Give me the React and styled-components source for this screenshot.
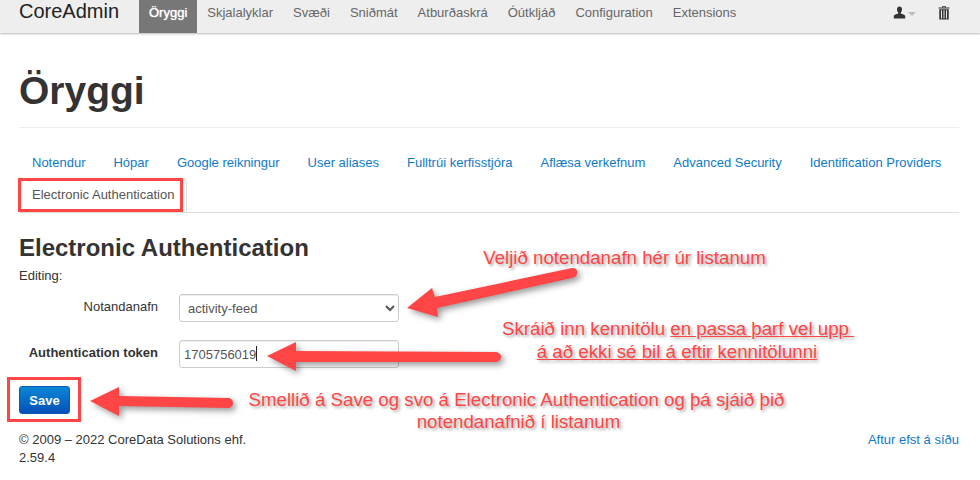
import React from "react";
import styled, { createGlobalStyle } from "styled-components";

const Global = createGlobalStyle`
  html, body { margin: 0; padding: 0; background: #fff; }
  body { font-family: "Liberation Sans", Arial, sans-serif; font-size: 13px; line-height: 18px; color: #333; }
  * { box-sizing: border-box; }
`;
const Page = styled.div`position: relative; width: 980px; height: 480px; overflow: hidden;`;
const Navbar = styled.header`
  display: flex; align-items: stretch; height: 33px; padding: 0 19px; background: #eeeeee;
  box-shadow: 0 1px 2px rgba(0,0,0,.28);
`;
const Brand = styled.div`font-size: 20px; line-height: 22px; color: #222; width: 120px;`;
const NavList = styled.nav`display: flex; flex: 1;`;
const NavItem = styled.a`
  padding: 5px 10px 0; font-size: 13px; line-height: 16px;
  color: ${p => p.$active ? "#fff" : "#666"};
  background: ${p => p.$active ? "#777" : "transparent"};
  text-shadow: ${p => p.$active ? "0 0 1px #fff" : "none"};
`;
const NavIcons = styled.div`display: flex; align-items: flex-start; padding-top: 6px; margin-right: 11px;`;
const Caret = styled.span`width: 0; height: 0; margin: 6px 0 0 2px; border: 4px solid transparent; border-top-color: #bbb; border-bottom: 0;`;
const IconGap = styled.span`width: 22px;`;
const Main = styled.main`padding: 0 21px 0 19px;`;
const Title = styled.h1`
  margin: 0; padding: 36px 0 14px; font-size: 39px; line-height: 44px; font-weight: 700; color: #333;
  border-bottom: 1px solid #eee;
`;
const Tabs = styled.ul`
  list-style: none; display: flex; flex-wrap: wrap; margin: 19px 0 0; padding: 0 0 1px; border-bottom: 1px solid #ddd;
`;
const Tab = styled.li`
  margin-right: 2px; padding: 6px 12px 7px; height: 33px; line-height: 18px; font-size: 13px; margin-bottom: -1px;
  border: 1px solid ${p => p.$active ? "#ddd" : "transparent"};
  border-bottom-color: ${p => p.$active ? "#fff" : "transparent"};
  border-radius: 4px 4px 0 0;
  color: ${p => p.$active ? "#555" : "#0f7ac7"};
  background: #fff;
`;
const Section = styled.h2`margin: 21px 0 0; font-size: 24px; line-height: 28px; font-weight: 700; color: #333;`;
const Editing = styled.div`margin-top: 5px; font-size: 13px; line-height: 18px;`;
const Row = styled.div`display: flex; align-items: center; margin-top: ${p => p.$first ? "9px" : "18px"};`;
const Label = styled.label`width: 139px; text-align: right; margin-right: 21px; font-size: 13px; font-weight: ${p => p.$bold ? 700 : 400}; color: #333; position: relative; top: -1px;`;
const Select = styled.select`
  width: 220px; height: 28px; padding: 0 4px; font: 13px "Liberation Sans", Arial, sans-serif; color: #555;
  background: #fff; border: 1px solid #ccc; border-radius: 3px; box-shadow: inset 0 1px 1px rgba(0,0,0,.075);
`;
const Input = styled.input`
  width: 220px; height: 28px; padding: 0 4px; font: 13px "Liberation Sans", Arial, sans-serif; color: #555;
  background: #fff; border: 1px solid #ccc; border-radius: 3px; box-shadow: inset 0 1px 1px rgba(0,0,0,.075);
`;
const Cursor = styled.span`position: absolute; left: 256px; top: 346px; width: 1px; height: 15px; background: #222;`;
const SaveButton = styled.button`
  display: block; margin-top: 18px; width: 51px; height: 28px; padding: 0; font: 700 13px "Liberation Sans", Arial, sans-serif;
  color: #fff; border: 1px solid #0b58b4; border-radius: 3px; background: linear-gradient(#0c86d6, #0451b8);
`;
const Footer = styled.footer`display: flex; justify-content: space-between; margin-top: 17px; font-size: 13px; line-height: 18px; color: #333;`;
const Copyright = styled.div``;
const TopLink = styled.a`color: #0f7ac7;`;
const Overlay = styled.svg`position: absolute; left: 0; top: 0; pointer-events: none; overflow: visible;`;
const Note = styled.div`
  position: absolute; left: ${p => p.$x}px; top: ${p => p.$y}px; width: ${p => p.$w}px; text-align: center;
  font-size: 18.7px; line-height: 22.5px; color: #ff4545; white-space: nowrap;
  text-shadow: 2px 2px 3px rgba(0,0,0,.35);
`;
const Under = styled.span`text-decoration: underline; white-space: pre;`;

const UserIcon = () => (
  <svg width="13" height="13" viewBox="0 0 13 13"><path fill="#333" d="M4 3.2C4 1.4 5 .5 6.5.5S9 1.4 9 3.2c0 1.4-.5 2.6-1.2 3.3v1.1c1.6.7 4 1.2 4.4 2.3v2.6H.8V9.9c.4-1.1 2.8-1.6 4.4-2.3V6.5C4.500 5.800 4 4.600 4 3.200z" /></svg>
);
const TrashIcon = () => (
  <svg width="12" height="14" viewBox="0 0 12 14"><path fill="#333" d="M4.200 0h3.600v1.500H11.500v1H.5v-1h3.700zM5 .8v.7h2V.8zM1.300 3.300h9.400V13.500H1.300zM3 4.300v8.200h1V4.300zm2.500 0v8.200h1V4.300zm2.500 0v8.200h1V4.300z" fillRule="evenodd" /></svg>
);

const Arrow = ({ d }) => <path d={d} fill="#ff4545" />;

const navItems = ["Skjalalyklar", "Svæði", "Sniðmát", "Atburðaskrá", "Óútkljáð", "Configuration", "Extensions"];
const tabItems = ["Notendur", "Hópar", "Google reikningur", "User aliases", "Fulltrúi kerfisstjóra", "Aflæsa verkefnum", "Advanced Security", "Identification Providers"];

export default function App() {
  return (
    <Page>
      <Global />
      <Navbar>
        <Brand>CoreAdmin</Brand>
        <NavList>
          <NavItem $active>Öryggi</NavItem>
          {navItems.map(n => <NavItem key={n}>{n}</NavItem>)}
        </NavList>
        <NavIcons><UserIcon /><Caret /><IconGap /><TrashIcon /></NavIcons>
      </Navbar>
      <Main>
        <Title>Öryggi</Title>
        <Tabs>
          {tabItems.map(t => <Tab key={t}>{t}</Tab>)}
          <Tab $active>Electronic Authentication</Tab>
        </Tabs>
        <Section>Electronic Authentication</Section>
        <Editing>Editing:</Editing>
        <Row $first>
          <Label>Notandanafn</Label>
          <Select defaultValue="activity-feed"><option>activity-feed</option></Select>
        </Row>
        <Row>
          <Label $bold>Authentication token</Label>
          <Input defaultValue="1705756019" />
        </Row>
        <SaveButton>Save</SaveButton>
        <Footer>
          <Copyright>© 2009 – 2022 CoreData Solutions ehf.<br />2.59.4</Copyright>
          <TopLink>Aftur efst á síðu</TopLink>
        </Footer>
      </Main>
      <Cursor />
      <Overlay width="980" height="480" viewBox="0 0 980 480">
        <g fill="none" stroke="#ff4545" strokeWidth="3">
          <rect x="19.500" y="179.500" width="162" height="31" />
          <rect x="8.500" y="378.500" width="71" height="42" />
        </g>
        <g style={{ filter: "drop-shadow(3px 3px 3px rgba(0,0,0,.4))" }}>
          <Arrow d="M407 308 L432 288 L435 297 L572 268 Q578 268 577 273 Q577 277 572 278 L437 308 L438 317 Z" />
          <Arrow d="M267 356 L296 342 L296 351 L496 352 Q501 353 501 357 Q501 361 496 362 L296 362 L296 371 Z" />
          <Arrow d="M90 401 L119 387 L119 396 L229 398 Q233 399 233 403 Q233 407 229 408 L119 406 L119 416 Z" />
        </g>
      </Overlay>
      <Note $x={483} $y={247} $w={283}>Veljið notendanafn hér úr listanum</Note>
      <Note $x={502} $y={318} $w={348}>Skráið inn kennitölu <Under>en passa þarf vel upp </Under></Note>
      <Note $x={503} $y={341} $w={348}><Under>á að ekki sé bil á eftir kennitölunni</Under></Note>
      <Note $x={245} $y={389} $w={543}>Smellið á Save og svo á Electronic Authentication og þá sjáið þið</Note>
      <Note $x={247} $y={411} $w={543}>notendanafnið í listanum</Note>
    </Page>
  );
}
